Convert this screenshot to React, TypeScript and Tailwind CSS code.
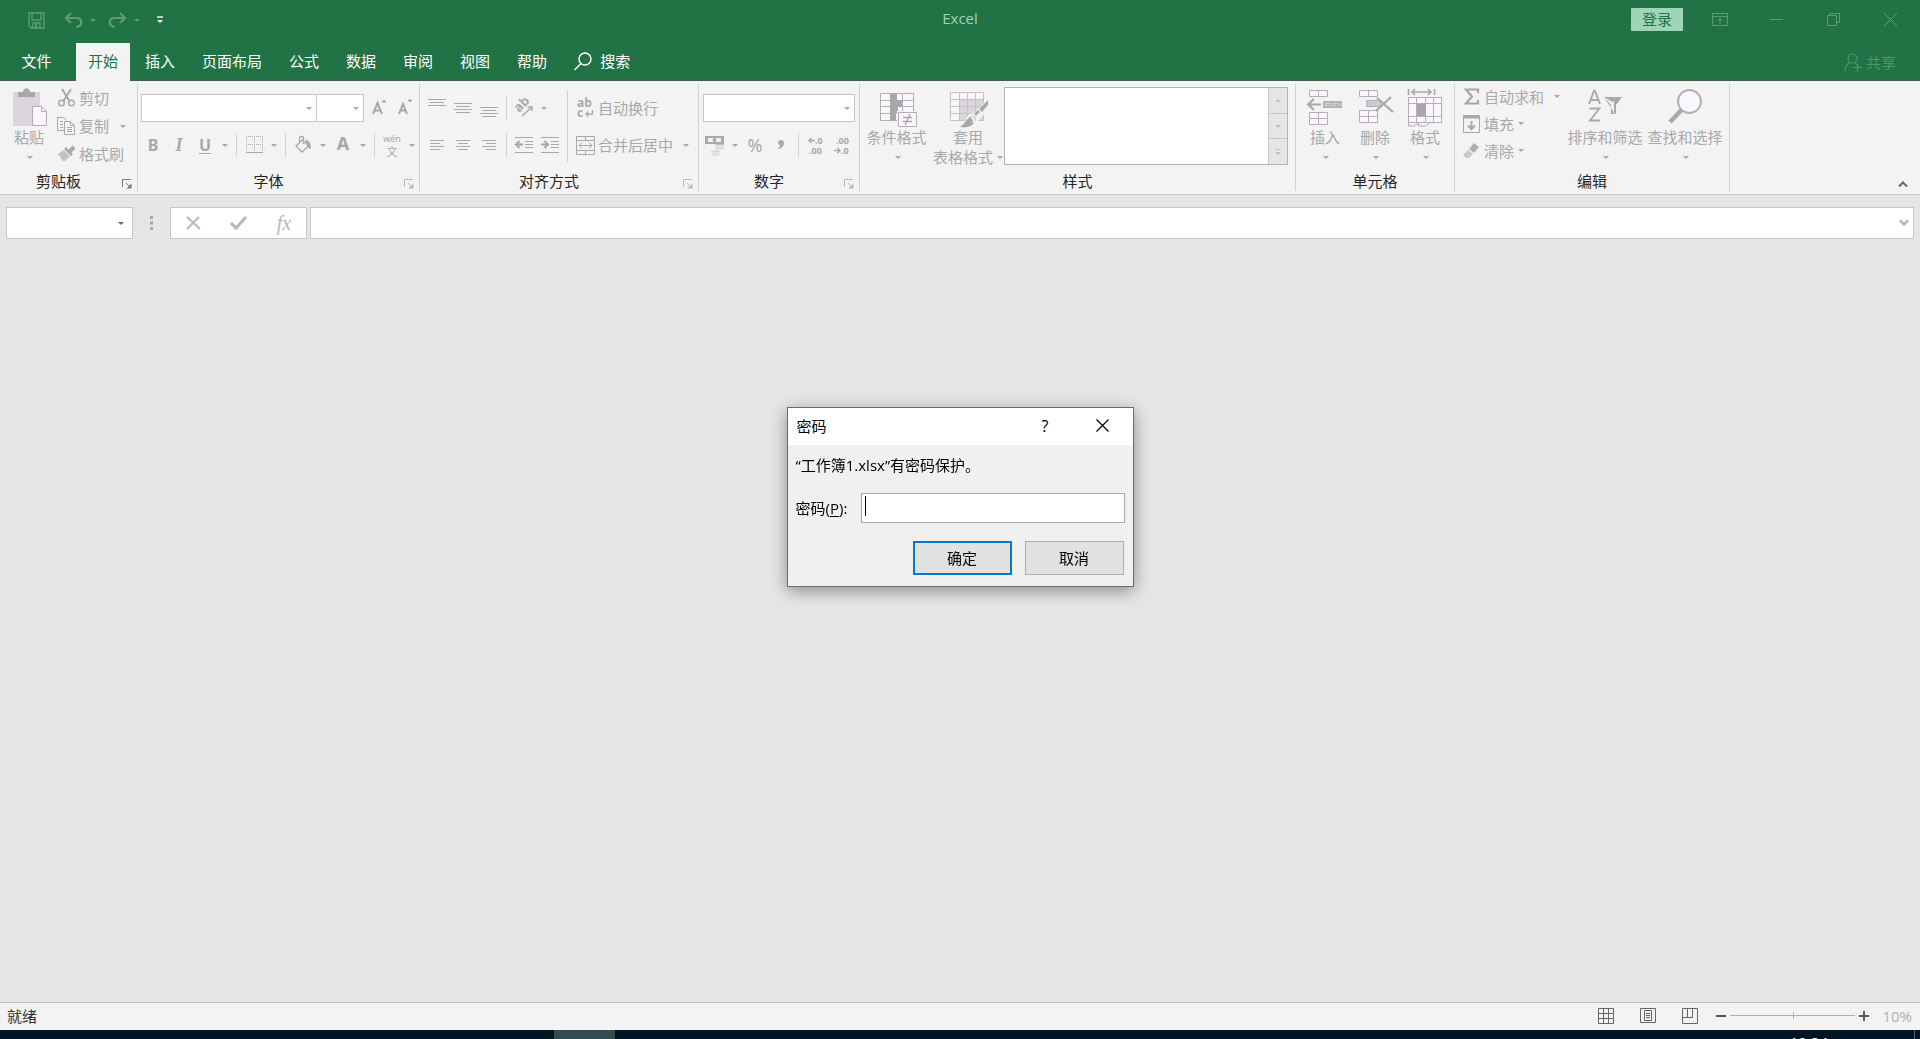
import type { ReactNode } from "react";

const TABS = ["开始", "插入", "页面布局", "公式", "数据", "审阅", "视图", "帮助"];

function Svg({ w, h, children }: { w: number; h: number; children: ReactNode }) {
    return (
        <svg width={w} height={h} viewBox={`0 0 ${w} ${h}`} fill="none" stroke="currentColor" className="shrink-0 overflow-visible" aria-hidden="true">
            {children}
        </svg>
    );
}

function Caret() {
    return (
        <svg width="6" height="3" viewBox="0 0 6 3" className="shrink-0" aria-hidden="true">
            <path d="M0 0h6L3 3z" fill="currentColor" />
        </svg>
    );
}

function Divider() {
    return <div className="mx-1 h-6 w-px shrink-0 bg-[#d2d2d2]" />;
}

function Tool({ label, children }: { label: string; children: ReactNode }) {
    return (
        <button type="button" aria-label={label} className="flex h-7 w-[26px] shrink-0 items-center justify-center">
            {children}
        </button>
    );
}

function Drop({ label }: { label: string }) {
    return (
        <button type="button" aria-label={label} className="flex h-7 w-3.5 shrink-0 items-center justify-center">
            <Caret />
        </button>
    );
}

function Combo({ label, className }: { label: string; className: string }) {
    return (
        <div className={`relative flex items-center border border-[#c6c6c6] bg-white ${className}`}>
            <select aria-label={label} className="h-full w-full appearance-none bg-transparent outline-none" />
            <span className="pointer-events-none absolute right-1 flex">
                <Caret />
            </span>
        </div>
    );
}

function Group({ title, launcher, dark, className, children }: { title: string; launcher?: boolean; dark?: boolean; className: string; children: ReactNode }) {
    return (
        <>
            <section className={`flex shrink-0 flex-col ${className}`}>
                <div className="h-[90px]">{children}</div>
                <div className="flex h-[23px] items-start">
                    <h2 className="flex-1 text-center text-[#262626]">{title}</h2>
                    {launcher && (
                        <button type="button" aria-label={`${title}设置`} className={`flex w-5 justify-center pt-2 ${dark ? "text-[#777777]" : "text-[#b8b8b8]"}`}>
                            <Svg w={10} h={10}>
                                <path d="M.5 8V.5H9M4 4l4 4" />
                                <path d="M9.5 4.5v5h-5z" fill="currentColor" stroke="none" />
                            </Svg>
                        </button>
                    )}
                </div>
            </section>
            <div className="my-[3px] w-px shrink-0 bg-[#d2d2d2]" />
        </>
    );
}

function BigButton({ icon, children, className }: { icon: ReactNode; children: ReactNode; className: string }) {
    return (
        <button type="button" className={`flex shrink-0 flex-col items-center whitespace-nowrap pt-[7px] leading-5 ${className}`}>
            <span className="flex h-[39px] items-start justify-center">{icon}</span>
            {children}
        </button>
    );
}

function DropLine() {
    return (
        <span className="flex h-5 items-center pl-0.5 pt-px">
            <Caret />
        </span>
    );
}

function RowButton({ icon, label, className, children }: { icon: ReactNode; label: string; className: string; children?: ReactNode }) {
    return (
        <button type="button" className={`flex items-center whitespace-nowrap ${className}`}>
            <span className="flex w-[26px] justify-center">{icon}</span>
            {label}
            {children}
        </button>
    );
}

/* Three or more horizontal strokes, given as [y, x1, x2] */
function Lines({ rows }: { rows: number[][] }) {
    return (
        <Svg w={20} h={20}>
            {rows.map(([y, a, b]) => (
                <path key={y} d={`M${a} ${y}.5H${b}`} />
            ))}
        </Svg>
    );
}

function Header() {
    return (
        <header className="shrink-0 bg-[#217346] shadow-[inset_0_-1px_#46604f]">
            <div className="flex h-9 items-center">
                <div className="flex-1">
                    <div className="flex items-center pl-[23px] pt-1 text-[#5c9d78]">
                        <Tool label="保存">
                            <Svg w={17} h={17}>
                                <path d="M1 1h15v15H3l-2-2zM4 1v7h9V1M5 16v-5h7v5" strokeWidth="1.4" />
                                <path d="M7 12h2v4H7z" fill="currentColor" stroke="none" />
                            </Svg>
                        </Tool>
                        <div className="w-[11px]" />
                        <Tool label="撤消">
                            <Svg w={19} h={16}>
                                <path d="M7 1 2 6l5 5M2 6h10c7 0 7 8 0 9" strokeWidth="2.2" />
                            </Svg>
                        </Tool>
                        <Drop label="撤消选项" />
                        <div className="w-1" />
                        <Tool label="恢复">
                            <Svg w={19} h={16}>
                                <path d="m12 1 5 5-5 5M17 6H7C0 6 0 14 7 15" strokeWidth="2.2" />
                            </Svg>
                        </Tool>
                        <Drop label="恢复选项" />
                        <button type="button" aria-label="自定义快速访问工具栏" className="ml-3 flex text-white">
                            <Svg w={8} h={8}>
                                <path d="M1 1h6" strokeWidth="1.4" />
                                <path d="M1 4h6L4 7z" fill="currentColor" stroke="none" />
                            </Svg>
                        </button>
                    </div>
                </div>
                <h1 className="text-[#9fd5b7]">Excel</h1>
                <div className="flex flex-1 items-center justify-end pt-0.5 text-[#5c9d78]">
                    <button type="button" className="mr-2 flex h-[23px] w-[52px] items-center justify-center rounded-[1px] bg-[#9fd5b7] text-[#217346]">
                        登录
                    </button>
                    <button type="button" aria-label="功能区显示选项" className="flex w-[57px] justify-center">
                        <Svg w={16} h={13}>
                            <path d="M.5.5h15v12H.5zM0 3.5h16M8 11V5M5.5 7.5 8 5l2.5 2.5" />
                        </Svg>
                    </button>
                    <button type="button" aria-label="最小化" className="flex w-[57px] justify-center">
                        <Svg w={13} h={13}>
                            <path d="M0 6.5h13" />
                        </Svg>
                    </button>
                    <button type="button" aria-label="还原" className="flex w-[57px] justify-center">
                        <Svg w={13} h={13}>
                            <path d="M.5 2.5h9v10h-9zM2.5 2.5v-2h10v9h-3" />
                        </Svg>
                    </button>
                    <button type="button" aria-label="关闭" className="mr-px flex w-[57px] justify-center">
                        <Svg w={13} h={13}>
                            <path d="m0 0 13 13M13 0 0 13" />
                        </Svg>
                    </button>
                </div>
            </div>
            <nav className="mt-[7px] flex h-[38px] items-stretch gap-[3px] text-white">
                <button type="button" className="w-[73px] pb-[3px]">文件</button>
                {TABS.map((tab, i) => (
                    <button key={tab} type="button" className={i === 0 ? "bg-[#f3f3f3] px-3 pb-[3px] text-[#217346]" : "px-3 pb-[3px]"}>
                        {tab}
                    </button>
                ))}
                <button type="button" className="flex items-center gap-2 px-3 pb-0.5">
                    <Svg w={18} h={18}>
                        <circle cx="11" cy="7" r="6" strokeWidth="1.4" />
                        <path d="M7 11.5.5 18" strokeWidth="1.4" />
                    </Svg>
                    搜索
                </button>
                <button type="button" className="ml-auto mr-6 flex items-center gap-1 text-[#4f9570]">
                    <Svg w={18} h={18}>
                        <circle cx="8.500" cy="5.500" r="4.500" strokeWidth="1.2" />
                        <path d="M1 18c0-4 2-7 5-8.500M11 10l2 1.500M9 14.500h9M13.500 10.500v8" strokeWidth="1.2" />
                    </Svg>
                    共享
                </button>
            </nav>
        </header>
    );
}

function Ribbon() {
    return (
        <div className="flex shrink-0 overflow-hidden border-b border-[#c8c8c8] bg-[#f3f3f3] text-[#a8a8a8]">
            <Group title="剪贴板" launcher dark className="w-[137px]">
                <div className="flex">
                    <BigButton
                        className="w-14 pl-0.5"
                        icon={
                            <Svg w={32} h={40}>
                                <path d="M0 4h27v34H0z" fill="#dad5da" stroke="none" />
                                <path d="M5 4h5c0-5 7-5 7 0h5v5H5z" fill="#a8a8a8" stroke="none" />
                                <path d="M19.500 18.500h9l5 5v14h-14z" fill="#faf7fb" stroke="#b5adb8" />
                                <path d="M28.500 18.500v5h5" stroke="#b5adb8" />
                            </Svg>
                        }
                    >
                        粘贴
                        <DropLine />
                    </BigButton>
                    <div className="-ml-[3px] pt-[3px]">
                        <RowButton
                            className="h-7"
                            label="剪切"
                            icon={
                                <Svg w={17} h={18}>
                                    <path d="m4 0 7.500 12M13 0 5.500 12" strokeWidth="2" />
                                    <circle cx="3.500" cy="14" r="2.800" strokeWidth="1.500" />
                                    <circle cx="13.500" cy="14" r="2.800" strokeWidth="1.500" />
                                </Svg>
                            }
                        />
                        <RowButton
                            className="h-7"
                            label="复制"
                            icon={
                                <Svg w={18} h={18}>
                                    <path d="M7 13.500H.5V.5h6l3 3M3 4.500h3M3 7.500h3M3 10.500h3" />
                                    <path d="M7.500 4.500h6l4 4v9h-10zM13.500 4.500v4h4M10 10.500h5M10 12.500h5M10 14.500h5" />
                                </Svg>
                            }
                        >
                            <span className="ml-[11px] flex">
                                <Caret />
                            </span>
                        </RowButton>
                        <RowButton
                            className="h-7"
                            label="格式刷"
                            icon={
                                <Svg w={17} h={16}>
                                    <path d="m16 1-5 5" strokeWidth="4" />
                                    <path d="m7 2 7 7" strokeWidth="2.500" />
                                    <path d="m6 4 6 6-5 5H5l-5-7z" fill="#c4c4c4" stroke="none" />
                                </Svg>
                            }
                        />
                    </div>
                </div>
            </Group>

            <Group title="字体" launcher className="w-[281px]">
                <div className="flex pl-[3px] pt-[13px]">
                    <Combo label="字体名称" className="h-7 w-[176px]" />
                    <Combo label="字号" className="-ml-px h-7 w-12" />
                    <div className="w-0.5" />
                    <Tool label="增大字号">
                        <Svg w={14} h={18}>
                            <path d="m1 15 4.500-11L10 15M3 11.500h5" strokeWidth="2" />
                            <path d="m10 3 2-2 2 2z" fill="currentColor" />
                        </Svg>
                    </Tool>
                    <Tool label="减小字号">
                        <Svg w={14} h={18}>
                            <path d="m1 15 4-10 4 10M3 11.500h4.500" strokeWidth="2" />
                            <path d="m10 1 2 2 2-2z" fill="currentColor" />
                        </Svg>
                    </Tool>
                </div>
                <div className="flex items-center pl-0.5 pt-[9px] font-['Noto_Sans'] text-base">
                    <Tool label="加粗"><b>B</b></Tool>
                    <Tool label="倾斜"><i className="font-['Liberation_Serif'] text-lg font-bold">I</i></Tool>
                    <Tool label="下划线"><b className="underline underline-offset-2">U</b></Tool>
                    <Drop label="下划线选项" />
                    <Divider />
                    <Tool label="边框">
                        <Svg w={17} h={18}>
                            <path d="M.5 0v17M8.500 0v17M16.500 0v17M0 .5h17M0 8.500h17" strokeDasharray="1 1" />
                            <path d="M0 16.500h17" />
                        </Svg>
                    </Tool>
                    <Drop label="边框选项" />
                    <Divider />
                    <Tool label="填充颜色">
                        <Svg w={18} h={18}>
                            <path d="m8.500 4 6 6-6.500 6-6-6zM5.500 7V2c0-2 4-2 4 0v6" strokeWidth="1.300" />
                            <path d="M12 4c3 1 5 4 4 9l-2-3z" fill="currentColor" />
                        </Svg>
                    </Tool>
                    <Drop label="填充颜色选项" />
                    <Tool label="字体颜色"><b className="pb-1 text-lg leading-5">A</b></Tool>
                    <Drop label="字体颜色选项" />
                    <Divider />
                    <button type="button" aria-label="显示拼音" className="flex h-7 w-[26px] flex-col items-center justify-center">
                        <span className="text-[9px] leading-3">wén</span>
                        <span className="font-['Noto_Sans_CJK_SC'] text-[11px] leading-3">文</span>
                    </button>
                    <Drop label="拼音选项" />
                </div>
            </Group>

            <Group title="对齐方式" launcher className="w-[278px]">
                <div className="flex pl-1 pt-[9px]">
                    <div className="pt-1">
                        <div className="flex items-center">
                            <Tool label="顶端对齐"><Lines rows={[[1, 1, 19], [4, 3, 17], [7, 1, 19]]} /></Tool>
                            <Tool label="垂直居中"><Lines rows={[[5, 1, 19], [8, 3, 17], [11, 1, 19], [14, 3, 17]]} /></Tool>
                            <Tool label="底端对齐"><Lines rows={[[9, 1, 19], [12, 3, 17], [15, 1, 19], [18, 3, 17]]} /></Tool>
                            <Divider />
                            <Tool label="方向">
                                <Svg w={20} h={18}>
                                    <text x="0" y="0" transform="translate(5 14) rotate(-45)" fontSize="13" fontWeight="bold" fill="currentColor" stroke="none">ab</text>
                                    <path d="M8 17 18 8M13.500 8H18v4" strokeWidth="1.500" />
                                </Svg>
                            </Tool>
                            <Drop label="方向选项" />
                        </div>
                        <div className="flex items-center pt-[9px]">
                            <Tool label="左对齐"><Lines rows={[[5, 3, 17], [8, 3, 13], [11, 3, 17], [14, 3, 13]]} /></Tool>
                            <Tool label="居中"><Lines rows={[[5, 3, 17], [8, 5, 15], [11, 3, 17], [14, 5, 15]]} /></Tool>
                            <Tool label="右对齐"><Lines rows={[[5, 3, 17], [8, 7, 17], [11, 3, 17], [14, 7, 17]]} /></Tool>
                            <Divider />
                            <Tool label="减少缩进量">
                                <Svg w={20} h={18}>
                                    <path d="M1 1.500h18M11 5.500h8M11 8.500h8M11 11.500h8M1 16.500h18" />
                                    <path d="M9 8.500H2M5.500 5 2 8.500 5.500 12" strokeWidth="2" />
                                </Svg>
                            </Tool>
                            <Tool label="增加缩进量">
                                <Svg w={20} h={18}>
                                    <path d="M1 1.500h18M11 5.500h8M11 8.500h8M11 11.500h8M1 16.500h18" />
                                    <path d="M1 8.500h7M4.500 5 8 8.500 4.500 12" strokeWidth="2" />
                                </Svg>
                            </Tool>
                        </div>
                    </div>
                    <div className="mx-1 h-[72px] w-px bg-[#d2d2d2]" />
                    <div className="pt-1">
                        <RowButton
                            className="h-7"
                            label="自动换行"
                            icon={
                                <Svg w={17} h={18}>
                                    <text x="0" y="8" fontSize="12" fontWeight="bold" fill="currentColor" stroke="none">ab</text>
                                    <text x="0" y="18" fontSize="12" fontWeight="bold" fill="currentColor" stroke="none">c</text>
                                    <path d="M15.500 11v4H9M11.500 12.500 9 15l2.500 2.500" strokeWidth="1.300" />
                                </Svg>
                            }
                        />
                        <RowButton
                            className="mt-[9px] h-7"
                            label="合并后居中"
                            icon={
                                <Svg w={19} h={19}>
                                    <path d="M.5.5h18v18H.5zM.5 4.500h18M.5 14.500h18M9.500 0v4.500M9.500 14.500V19M3 9.500h13M6 6.500l-3 3 3 3M13 6.500l3 3-3 3" />
                                </Svg>
                            }
                        >
                            <span className="ml-2.5 flex">
                                <Caret />
                            </span>
                        </RowButton>
                    </div>
                </div>
            </Group>

            <Group title="数字" launcher className="w-[160px]">
                <div className="flex pl-1 pt-[13px]">
                    <Combo label="数字格式" className="h-7 w-[152px]" />
                </div>
                <div className="flex items-center pl-[3px] pt-[9px] font-['Noto_Sans']">
                    <Tool label="会计数字格式">
                        <Svg w={20} h={20}>
                            <path d="M0 1h19v10h-8V9H0z" fill="currentColor" stroke="none" />
                            <path d="M3 3h13v4H3z" fill="#f3f3f3" stroke="none" />
                            <circle cx="9.500" cy="5" r="2" fill="currentColor" stroke="none" />
                            <path d="M10 10.500h9M10 13.500h9M6 16.500h9M7 19.500h7" stroke="#d8d8d8" strokeWidth="2" />
                        </Svg>
                    </Tool>
                    <Drop label="会计数字格式选项" />
                    <Tool label="百分比样式"><span className="text-lg">%</span></Tool>
                    <Tool label="千位分隔样式">
                        <Svg w={8} h={10}>
                            <path d="M1 3c0-4 6-4 6 0 0 3-2 5-5 6l-1-1c2-1 2-2 2-3-1 0-2-1-2-2z" fill="currentColor" stroke="none" />
                        </Svg>
                    </Tool>
                    <Divider />
                    <Tool label="增加小数位数">
                        <Svg w={18} h={18}>
                            <path d="M8 4.500H2M4.500 2 2 4.500 4.500 7" strokeWidth="1.400" />
                            <text x="8" y="8" fontSize="9" fontWeight="bold" fill="currentColor" stroke="none">.0</text>
                            <text x="2" y="18" fontSize="9" fontWeight="bold" fill="currentColor" stroke="none">.00</text>
                        </Svg>
                    </Tool>
                    <Tool label="减少小数位数">
                        <Svg w={18} h={18}>
                            <path d="M1 14.500h6M4.500 12 7 14.500 4.500 17" strokeWidth="1.400" />
                            <text x="3" y="8" fontSize="9" fontWeight="bold" fill="currentColor" stroke="none">.00</text>
                            <text x="8" y="18" fontSize="9" fontWeight="bold" fill="currentColor" stroke="none">.0</text>
                        </Svg>
                    </Tool>
                </div>
            </Group>

            <Group title="样式" className="w-[435px]">
                <div className="flex">
                    <BigButton
                        className="w-[72px] pl-px"
                        icon={
                            <Svg w={34} h={40}>
                                <path d="M.5 5.500h33v27H.5zM.5 12.500h33M.5 18.500h33M.5 25.500h33M22.500 5v28" fill="#faf7fb" stroke="#b5adb8" />
                                <path d="M10 5h7v7h5v7h-4v6h-2v8h-6z" fill="#a8a8a8" stroke="none" />
                                <path d="M17 23h21v16H17z" fill="#f3f3f3" stroke="none" />
                                <path d="M18.500 24.500h18v14h-18z" fill="#faf7fb" stroke="#b5adb8" />
                                <path d="M23 29.500h9M23 33.500h9M30 26l-5 11" strokeWidth="1.300" />
                            </Svg>
                        }
                    >
                        条件格式
                        <DropLine />
                    </BigButton>
                    <BigButton
                        className="w-[72px]"
                        icon={
                            <Svg w={36} h={40}>
                                <path d="M.5 4.500h33v28H.5z" fill="#faf7fb" stroke="none" />
                                <path d="M9 11h25v22H9z" fill="#dad5da" stroke="none" />
                                <path d="M.5 4.500h33v28H.5zM.5 11.500h33M.5 18.500h33M.5 25.500h33M9.500 4v28M17.500 4v28M25.500 4v28" stroke="#c6bfc8" />
                                <path d="m38 11-14 14-5 1-9 14h14l3-6L38 22z" fill="#f3f3f3" stroke="none" />
                                <path d="m38 12-9 9 3 3 6-7zM28 22l-4 4 2 2 4-4zM22 28c4 0 5 4 2 7-3 4-8 5-14 4 5-3 7-10 12-11z" fill="#a8a8a8" stroke="none" />
                                <path d="M21 29.500c3 0 4 3 2 5" stroke="#f3f3f3" strokeWidth="2.500" />
                            </Svg>
                        }
                    >
                        套用
                        <span className="flex items-center gap-1">
                            表格格式
                            <Caret />
                        </span>
                    </BigButton>
                    <div className="mt-1.5 flex h-[78px] w-[284px] border border-[#b2b2b2] bg-white">
                        <div className="flex-1" />
                        <div className="flex w-[19px] flex-col divide-y divide-[#c6c6c6] border-l border-[#c6c6c6] bg-[#e6e6e6] text-[#c0c0c0]">
                            <button type="button" aria-label="上一行" className="flex flex-1 items-center justify-center">
                                <span className="flex rotate-180"><Caret /></span>
                            </button>
                            <button type="button" aria-label="下一行" className="flex flex-1 items-center justify-center">
                                <Caret />
                            </button>
                            <button type="button" aria-label="其他样式" className="flex flex-1 items-center justify-center">
                                <Svg w={6} h={6}>
                                    <path d="M0 .5h6" />
                                    <path d="M0 3h6L3 6z" fill="currentColor" stroke="none" />
                                </Svg>
                            </button>
                        </div>
                    </div>
                </div>
            </Group>

            <Group title="单元格" className="w-[158px]">
                <div className="flex pl-1">
                    <BigButton
                        className="w-[50px]"
                        icon={
                            <Svg w={36} h={40}>
                                <path d="M2.500 2.500h18v6h-18zM11.500 2v7M2.500 24.500h18v12h-18zM11.500 24v13M2 30.500h19" fill="#faf7fb" stroke="#b5adb8" />
                                <path d="M16 13h19v7H16z" fill="#b4b4b4" stroke="none" />
                                <path d="M18 15.500h15v2H18z" stroke="#d5d0d5" strokeDasharray="5 2" />
                                <path d="M14 16.500H1M7 11l-6 5.500L7 22" strokeWidth="2.200" />
                            </Svg>
                        }
                    >
                        插入
                        <DropLine />
                    </BigButton>
                    <BigButton
                        className="w-[50px]"
                        icon={
                            <Svg w={36} h={40}>
                                <path d="M2.500 2.500h18v6h-18zM11.500 2v7M2.500 22.500h18v12h-18zM11.500 22v13M2 28.500h19" fill="#faf7fb" stroke="#b5adb8" />
                                <path d="M9.500 12.500h14v6h-14z" fill="#cfcacf" stroke="#b5adb8" />
                                <path d="m20 10 16 14M34 9 19 23" strokeWidth="2.200" />
                            </Svg>
                        }
                    >
                        删除
                        <DropLine />
                    </BigButton>
                    <BigButton
                        className="w-[50px]"
                        icon={
                            <Svg w={36} h={40}>
                                <path d="M1.500 1v6M27.500 1v6M5 4h19M8 1 5 4l3 3M21 1l3 3-3 3" strokeWidth="1.600" />
                                <path d="M1.500 9.500h33v25h-33zM1.500 15.500h33M1.500 28.500h33M9.500 9v26M18.500 9v26M26.500 9v26" fill="#faf7fb" stroke="#b5adb8" />
                                <path d="M10 16h9v12h-9z" fill="#a8a8a8" stroke="none" />
                                <path d="M1.500 34v4h6l4-3v3h7l5-4" stroke="#b5adb8" />
                            </Svg>
                        }
                    >
                        格式
                        <DropLine />
                    </BigButton>
                </div>
            </Group>

            <Group title="编辑" className="w-[274px]">
                <div className="flex pl-[3px]">
                    <div className="w-[107px] pt-0.5">
                        <RowButton
                            className="h-[27px]"
                            label="自动求和"
                            icon={
                                <Svg w={15} h={17}>
                                    <path d="M14 5V1.500H2l6 7-6 7h12V12" strokeWidth="2.200" />
                                </Svg>
                            }
                        >
                            <span className="ml-2.5 flex">
                                <Caret />
                            </span>
                        </RowButton>
                        <RowButton
                            className="h-[27px]"
                            label="填充"
                            icon={
                                <Svg w={17} h={18}>
                                    <path d="M.5.5h16v17H.5z" />
                                    <path d="M0 2h17" strokeWidth="3" />
                                    <path d="M8.500 6v8M5 10.500l3.500 3.500 3.500-3.500" strokeWidth="2" />
                                </Svg>
                            }
                        >
                            <span className="ml-1 flex">
                                <Caret />
                            </span>
                        </RowButton>
                        <RowButton
                            className="h-[27px]"
                            label="清除"
                            icon={
                                <Svg w={17} h={15}>
                                    <path d="m11 0 5 4-5 6-5-4z" fill="#b0b0b0" stroke="none" />
                                    <path d="m5 7 5 4-4 4H3l-3-3z" fill="#c9c9c9" stroke="none" />
                                </Svg>
                            }
                        >
                            <span className="ml-1 flex">
                                <Caret />
                            </span>
                        </RowButton>
                    </div>
                    <BigButton
                        className="w-20"
                        icon={
                            <Svg w={34} h={36}>
                                <path d="m1 16 5-13h1l5 13M3 12h7M1.500 20.500h10L2 32.500h10" strokeWidth="1.800" />
                                <path d="M16 9h18l-6 8v9h-1M16 9l7 8v9h3V15" fill="currentColor" stroke="none" />
                                <path d="M25.500 13v12" stroke="#f3f3f3" />
                            </Svg>
                        }
                    >
                        排序和筛选
                        <DropLine />
                    </BigButton>
                    <BigButton
                        className="w-20"
                        icon={
                            <Svg w={34} h={36}>
                                <circle cx="21.500" cy="13.500" r="11.500" fill="#faf7fb" stroke="#b5adb8" strokeWidth="2" />
                                <path d="M13.500 22 2 34" strokeWidth="4.500" />
                            </Svg>
                        }
                    >
                        查找和选择
                        <DropLine />
                    </BigButton>
                </div>
            </Group>
            <button type="button" aria-label="折叠功能区" className="ml-auto mr-3 flex items-end pb-1.5 text-[#666666]">
                <Svg w={10} h={8}>
                    <path d="m1 6.500 4-4 4 4" strokeWidth="2" />
                </Svg>
            </button>
        </div>
    );
}

function FormulaBar() {
    return (
        <div className="flex h-8 items-stretch px-1.5">
            <div className="relative flex w-[127px] items-center border border-[#c6c6c6] bg-white">
                <select aria-label="名称框" className="h-full w-full appearance-none bg-transparent outline-none" />
                <span className="pointer-events-none absolute right-2 flex text-[#666666]">
                    <Caret />
                </span>
            </div>
            <div className="flex w-[37px] items-center justify-center text-[#a8a8a8]">
                <Svg w={3} h={14}>
                    <path d="M1.500 0v14" strokeWidth="3" strokeDasharray="3 2.500" />
                </Svg>
            </div>
            <div className="flex w-[137px] items-center justify-around border border-[#c6c6c6] bg-white text-[#b8b8b8]">
                <button type="button" aria-label="取消输入">
                    <Svg w={15} h={14}>
                        <path d="m1 1 13 12M13 1 1 13" strokeWidth="2" />
                    </Svg>
                </button>
                <button type="button" aria-label="输入">
                    <Svg w={17} h={14}>
                        <path d="m1 7 5 5L16 1" strokeWidth="3" />
                    </Svg>
                </button>
                <button type="button" aria-label="插入函数" className="font-['Liberation_Serif'] text-xl italic leading-5">
                    fx
                </button>
            </div>
            <div className="ml-[3px] flex flex-1 items-center border border-[#c6c6c6] bg-white">
                <input type="text" aria-label="编辑栏" className="h-full flex-1 px-2 outline-none" />
                <button type="button" aria-label="展开编辑栏" className="mr-1 text-[#b8b8b8]">
                    <Svg w={10} h={8}>
                        <path d="m1 1.500 4 4 4-4" strokeWidth="2.500" />
                    </Svg>
                </button>
            </div>
        </div>
    );
}

function PasswordDialog() {
    return (
        <div className="fixed inset-0 flex items-start justify-center pt-[407px]">
            <form role="dialog" aria-label="密码" className="w-[347px] border border-[#6b6b6b] bg-[#f0f0f0] text-black shadow-[0_4px_16px_rgba(0,0,0,0.4)]">
                <div className="flex h-[37px] items-center bg-white pb-0.5 pl-[9px] pr-0.5">
                    <h2 className="flex-1">密码</h2>
                    <button type="button" aria-label="帮助" className="w-[57px] text-base">?</button>
                    <button type="button" aria-label="关闭对话框" className="flex w-[57px] justify-center">
                        <Svg w={13} h={13}>
                            <path d="m.5.5 12 12M12.500.5l-12 12" strokeWidth="1.200" />
                        </Svg>
                    </button>
                </div>
                <div className="px-2 pb-[11px] pt-2">
                    <p className="leading-6">“工作簿1.xlsx”有密码保护。</p>
                    <div className="mt-4 flex items-center">
                        <label htmlFor="password" className="w-[65px]">
                            密码(<u className="underline-offset-2">P</u>):
                        </label>
                        <div className="flex h-[30px] flex-1 border border-[#a8a8a8] bg-white pl-[3px] pt-0.5">
                            <span className="h-5 w-px bg-black" />
                            <input id="password" type="password" className="min-w-0 flex-1 caret-transparent outline-none" />
                        </div>
                    </div>
                    <div className="mt-[18px] flex justify-end gap-[13px] pr-px">
                        <button type="submit" className="h-[34px] w-[99px] border-2 border-[#0078d7] bg-[#e1e1e1]">确定</button>
                        <button type="button" className="h-[34px] w-[99px] border border-[#adadad] bg-[#e1e1e1]">取消</button>
                    </div>
                </div>
            </form>
        </div>
    );
}

function StatusBar() {
    return (
        <footer className="flex h-7 shrink-0 items-center border-t border-[#c0c0c0] bg-[#f3f3f3] pb-0.5 pl-[7px] pr-2 text-[#333333]">
            <span className="flex-1">就绪</span>
            <div className="flex items-center gap-[26px] text-[#666666]">
                <button type="button" aria-label="普通">
                    <Svg w={16} h={16}>
                        <path d="M.5.5h15v15H.5zM5.500 0v16M10.500 0v16M0 5.500h16M0 10.500h16" />
                    </Svg>
                </button>
                <button type="button" aria-label="页面布局视图">
                    <Svg w={16} h={16}>
                        <path d="M.5.5h15v14H.5zM4.500 2.500h7v10h-7zM6 5.500h4M6 7.500h4M6 9.500h4" />
                    </Svg>
                </button>
                <button type="button" aria-label="分页预览">
                    <Svg w={16} h={16}>
                        <path d="M.5.5h15v15H.5zM5.500 0v9M10.500 0v9M0 9.500h11" />
                    </Svg>
                </button>
            </div>
            <button type="button" aria-label="缩小" className="ml-[18px] text-[#555555]">
                <Svg w={10} h={10}>
                    <path d="M0 5h10" strokeWidth="2" />
                </Svg>
            </button>
            <div className="relative mx-1 flex w-[125px] items-center">
                <input
                    type="range"
                    aria-label="显示比例"
                    min={10}
                    max={400}
                    defaultValue={10}
                    className="h-px w-full appearance-none bg-[#b0b0b0] [&::-webkit-slider-thumb]:w-0 [&::-webkit-slider-thumb]:appearance-none"
                />
                <span className="absolute left-1/2 h-[7px] w-px bg-[#b0b0b0]" />
            </div>
            <button type="button" aria-label="放大" className="text-[#555555]">
                <Svg w={10} h={10}>
                    <path d="M0 5h10M5 0v10" strokeWidth="2" />
                </Svg>
            </button>
            <span className="w-[43px] text-right text-[#b0b0b0]">10%</span>
        </footer>
    );
}

export default function App() {
    return (
        <div className="flex h-screen flex-col overflow-hidden bg-[#e6e6e6] font-['Open_Sans','Noto_Sans_CJK_SC',sans-serif] text-[15px] leading-5">
            <Header />
            <Ribbon />
            <main className="flex-1 pt-3">
                <FormulaBar />
            </main>
            <StatusBar />
            <div className="flex h-[9px] shrink-0 items-start overflow-hidden bg-[#001524] text-[15px] text-white">
                <div className="ml-[554px] h-full w-[61px] bg-[#344b50]" />
                <time className="ml-auto mr-[86px] pt-0.5 leading-5">10:24</time>
                <div className="mr-[5px] h-full w-px bg-[#5c6670]" />
            </div>
            <PasswordDialog />
        </div>
    );
}
